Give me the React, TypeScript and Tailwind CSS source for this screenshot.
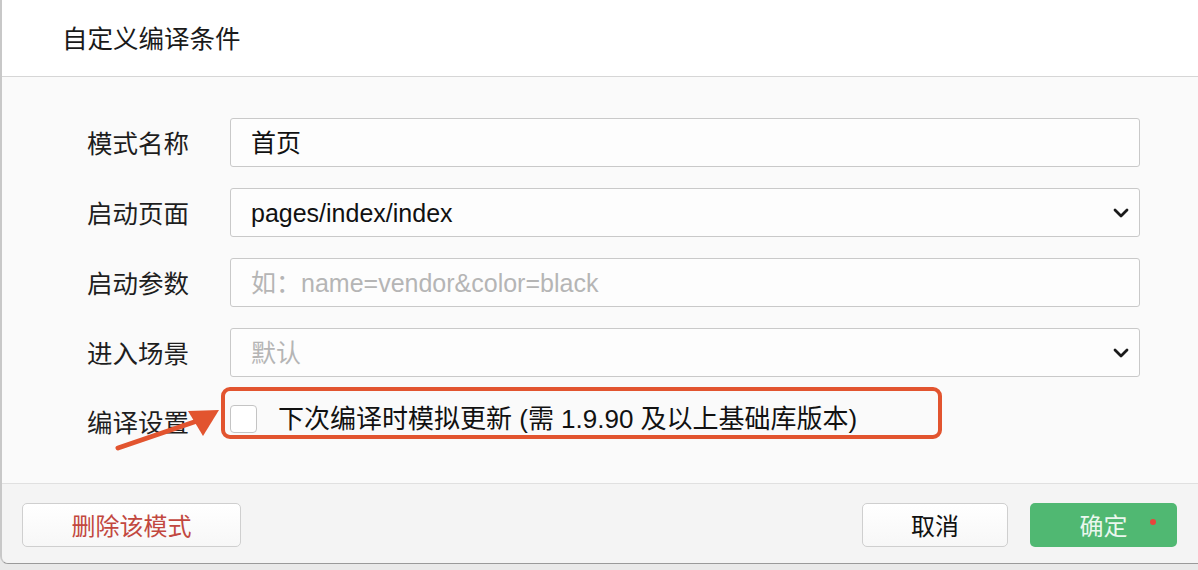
import React from "react";

const FONT = { fontFamily: '"Liberation Sans", "Noto Sans CJK SC", sans-serif' };

function Chevron() {
  return (
    <svg width="16" height="10" viewBox="0 0 16 10" className="absolute right-[10px] top-1/2 -translate-y-1/2">
      <path d="M2 2 L8 8 L14 2" fill="none" stroke="#1a1a1a" strokeWidth="2.8" strokeLinecap="round" strokeLinejoin="round" />
    </svg>
  );
}

function Row({ label, children }: { label: string; children: React.ReactNode }) {
  return (
    <div className="flex items-center h-[49px]">
      <div className="w-[143px] shrink-0 text-[25.5px] text-[#1e1e1e] pt-[3px]">{label}</div>
      {children}
    </div>
  );
}

function Field({ value, placeholder, select }: { value?: string; placeholder?: string; select?: boolean }) {
  return (
    <div className="relative flex-1 h-[49px] flex items-center pl-[20px] pt-[2px] bg-[#fdfdfd] border border-[#c9c9c9] rounded-[3px] text-[25px]">
      {value ? <span className="text-[#111]">{value}</span> : <span className="text-[#b5b5b5]">{placeholder}</span>}
      {select && <Chevron />}
    </div>
  );
}

export default function App() {
  return (
    <div className="relative w-[1198px] h-[570px] overflow-hidden bg-[#e9e9e9]" style={FONT}>
      <div className="flex flex-col h-[564px] border-l-2 border-b border-[#9a9a9a] border-l-[#c8c8c8] rounded-bl-[8px] overflow-hidden">
        {/* header */}
        <div className="h-[77px] shrink-0 bg-white border-b border-[#d6d6d6] flex items-center pl-[60px] pt-[2px]">
          <span className="text-[25.5px] text-[#1a1a1a]">自定义编译条件</span>
        </div>

        {/* body */}
        <div className="h-[407px] shrink-0 bg-[#fafafa] border-b border-[#e0e0e0] pt-[41px] pl-[85px] pr-[58px] flex flex-col gap-[21px]">
          <Row label="模式名称">
            <Field value="首页" />
          </Row>
          <Row label="启动页面">
            <Field value="pages/index/index" select />
          </Row>
          <Row label="启动参数">
            <Field placeholder="如：name=vendor&color=black" />
          </Row>
          <Row label="进入场景">
            <Field placeholder="默认" select />
          </Row>
          <div className="flex items-center h-[40px] mt-[1px]">
            <div className="w-[143px] shrink-0 text-[25.5px] text-[#1e1e1e] pt-[9px]">编译设置</div>
            <div className="w-[27px] h-[28px] bg-white border border-[#c4c4c4] rounded-[4px]" />
            <span className="ml-[21px] text-[26px] text-[#111]">下次编译时模拟更新 (需 1.9.90 及以上基础库版本)</span>
          </div>
        </div>

        {/* footer */}
        <div className="flex-1 bg-[#f4f4f4] flex items-start pt-[19px] pl-[20px] pr-[21px]">
          <button className="w-[219px] h-[44px] pt-[3px] bg-gradient-to-b from-white to-[#f7f7f7] border border-[#cfcfcf] rounded-[5px] text-[24px] text-[#c2483f]">
            删除该模式
          </button>
          <div className="flex-1" />
          <button className="w-[146px] h-[44px] pt-[3px] bg-gradient-to-b from-white to-[#f7f7f7] border border-[#cfcfcf] rounded-[5px] text-[24px] text-[#111]">
            取消
          </button>
          <button className="relative ml-[22px] w-[147px] h-[44px] pt-[3px] bg-[#50b872] rounded-[5px] text-[24px] text-[#eaf7ee]">
            确定
            <span className="absolute left-[120px] top-[16px] w-[6px] h-[6px] rounded-full bg-[#e8453c]" />
          </button>
        </div>
      </div>

      {/* annotation: highlight box */}
      <div className="absolute left-[221px] top-[387px] w-[721px] h-[52px] border-[4px] border-[#e2542f] rounded-[9px]" />

      {/* annotation: arrow */}
      <svg className="absolute left-0 top-0" width="1198" height="570" viewBox="0 0 1198 570" pointerEvents="none">
        <line x1="118" y1="448" x2="200" y2="420" stroke="#e2542f" strokeWidth="5" strokeLinecap="round" />
        <polygon points="219,410 188,411 203,436" fill="#e2542f" />
      </svg>
    </div>
  );
}
